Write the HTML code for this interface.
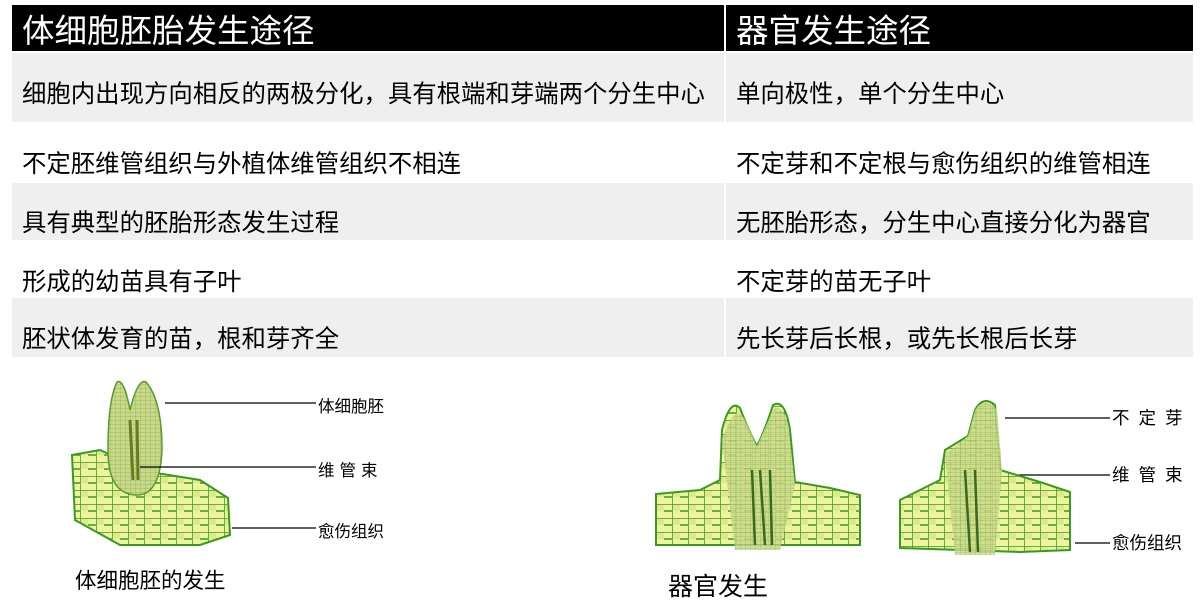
<!DOCTYPE html>
<html><head><meta charset="utf-8"><style>
*{margin:0;padding:0;box-sizing:border-box}
body{width:1204px;height:603px;background:#fff;position:relative;overflow:hidden;font-family:"Liberation Sans","Noto Sans CJK SC",sans-serif;color:#000}
.r{position:absolute;left:12px;width:1181px}
.c{position:absolute;top:0;bottom:0;display:flex;align-items:center;font-size:24.4px;white-space:nowrap}
.c1{left:0;width:712px;padding-left:10px}
.c2{left:714px;right:0;padding-left:10px}
.g .c{background:#efefef}
.h .c{background:#000;color:#fff;font-size:32.5px;padding-left:10px}
.lbl{position:absolute;font-size:16.5px;white-space:nowrap}
</style></head><body>
<div class="r h" style="top:5px;height:46px"><div class="c c1">体细胞胚胎发生途径</div><div class="c c2">器官发生途径</div></div>
<div class="r g" style="top:53px;height:69px"><div class="c c1" style="padding-top:10px">细胞内出现方向相反的两极分化，具有根端和芽端两个分生中心</div><div class="c c2" style="padding-top:10px">单向极性，单个分生中心</div></div>
<div class="r" style="top:122px;height:61px"><div class="c c1" style="padding-top:20px">不定胚维管组织与外植体维管组织不相连</div><div class="c c2" style="padding-top:20px">不定芽和不定根与愈伤组织的维管相连</div></div>
<div class="r g" style="top:183px;height:57px"><div class="c c1" style="padding-top:20px">具有典型的胚胎形态发生过程</div><div class="c c2" style="padding-top:20px">无胚胎形态，分生中心直接分化为器官</div></div>
<div class="r" style="top:240px;height:58px"><div class="c c1" style="padding-top:22px">形成的幼苗具有子叶</div><div class="c c2" style="padding-top:22px">不定芽的苗无子叶</div></div>
<div class="r g" style="top:298px;height:59px"><div class="c c1" style="padding-top:20px">胚状体发育的苗，根和芽齐全</div><div class="c c2" style="padding-top:20px">先长芽后长根，或先长根后长芽</div></div>

<svg width="1204" height="603" style="position:absolute;left:0;top:0">
<defs><pattern id="cell" width="16" height="14" patternUnits="userSpaceOnUse"><rect width="16" height="14" fill="#eef3a0"/><path d="M0 0H16M0 0V14M8 7H16" stroke="#3a9a20" stroke-width="1.5" fill="none"/><rect x="1" y="1" width="7" height="6" fill="#dfe98a"/></pattern>
<pattern id="fine" width="5" height="4" patternUnits="userSpaceOnUse"><rect width="5" height="4" fill="#c9d98a"/><path d="M0 0H5M0 0V4" stroke="#8aad52" stroke-width=".7"/></pattern></defs>
<path d="M72 455 L100 450 L150 472 L200 480 L228 498 L230 535 L200 545 L120 545 L75 520 Z" fill="url(#cell)" stroke="#3a9a20" stroke-width="2"/>
<path d="M117 382 Q124 378 130 410 Q138 378 146 382 Q162 400 162 450 Q160 495 137 495 Q108 495 108 450 Q108 400 117 382Z" fill="url(#fine)" stroke="#5a9a30" stroke-width="1.5"/>
<path d="M130 420 L133 480 M137 420 L138 480" stroke="#6a7a20" stroke-width="3"/>
<g stroke="#000" stroke-width="1.3"><line x1="165" y1="403" x2="316" y2="403"/><line x1="140" y1="467" x2="316" y2="467"/><line x1="232" y1="528" x2="316" y2="528"/>
<line x1="1005" y1="418" x2="1110" y2="418"/><line x1="998" y1="475" x2="1110" y2="475"/><line x1="1075" y1="543" x2="1110" y2="543"/></g>
<path d="M656 494 L700 490 L720 480 L722 430 Q730 398 740 408 Q748 430 757 446 Q765 430 773 405 Q785 398 790 430 L795 482 L830 488 L860 495 L860 545 L656 545 Z" fill="url(#cell)" stroke="#3a9a20" stroke-width="2"/>
<path d="M722 440 Q735 400 745 420 L757 446 L773 410 Q785 400 790 440 L795 485 L780 550 L735 550 Z" fill="url(#fine)" opacity=".85"/>
<path d="M900 500 L940 480 L945 450 L968 436 L975 410 Q983 395 995 405 L1000 470 L1040 482 L1070 492 L1070 550 L1020 552 L900 548 Z" fill="url(#cell)" stroke="#3a9a20" stroke-width="2"/>
<path d="M945 455 L968 436 L975 410 Q985 395 997 410 L1002 470 L995 555 L955 555 Z" fill="url(#fine)" opacity=".85"/>
<path d="M760 470 L765 545 M752 470 L755 545 M770 470 L772 545 M965 470 L970 552 M975 470 L978 552" stroke="#3a6a20" stroke-width="2.5"/>
</svg>
<div class="lbl" style="left:318px;top:393px">体细胞胚</div>
<div class="lbl" style="left:318px;top:457px;letter-spacing:5px">维管束</div>
<div class="lbl" style="left:318px;top:518px">愈伤组织</div>
<div class="lbl" style="left:1112px;top:405px;letter-spacing:9px;font-size:17.5px">不定芽</div>
<div class="lbl" style="left:1112px;top:462px;letter-spacing:9px;font-size:17.5px">维管束</div>
<div class="lbl" style="left:1112px;top:530px;font-size:17.5px">愈伤组织</div>
<div class="lbl" style="left:75px;top:564px;font-size:21.5px">体细胞胚的发生</div>
<div class="lbl" style="left:668px;top:567px;font-size:25px">器官发生</div>
</body></html>
